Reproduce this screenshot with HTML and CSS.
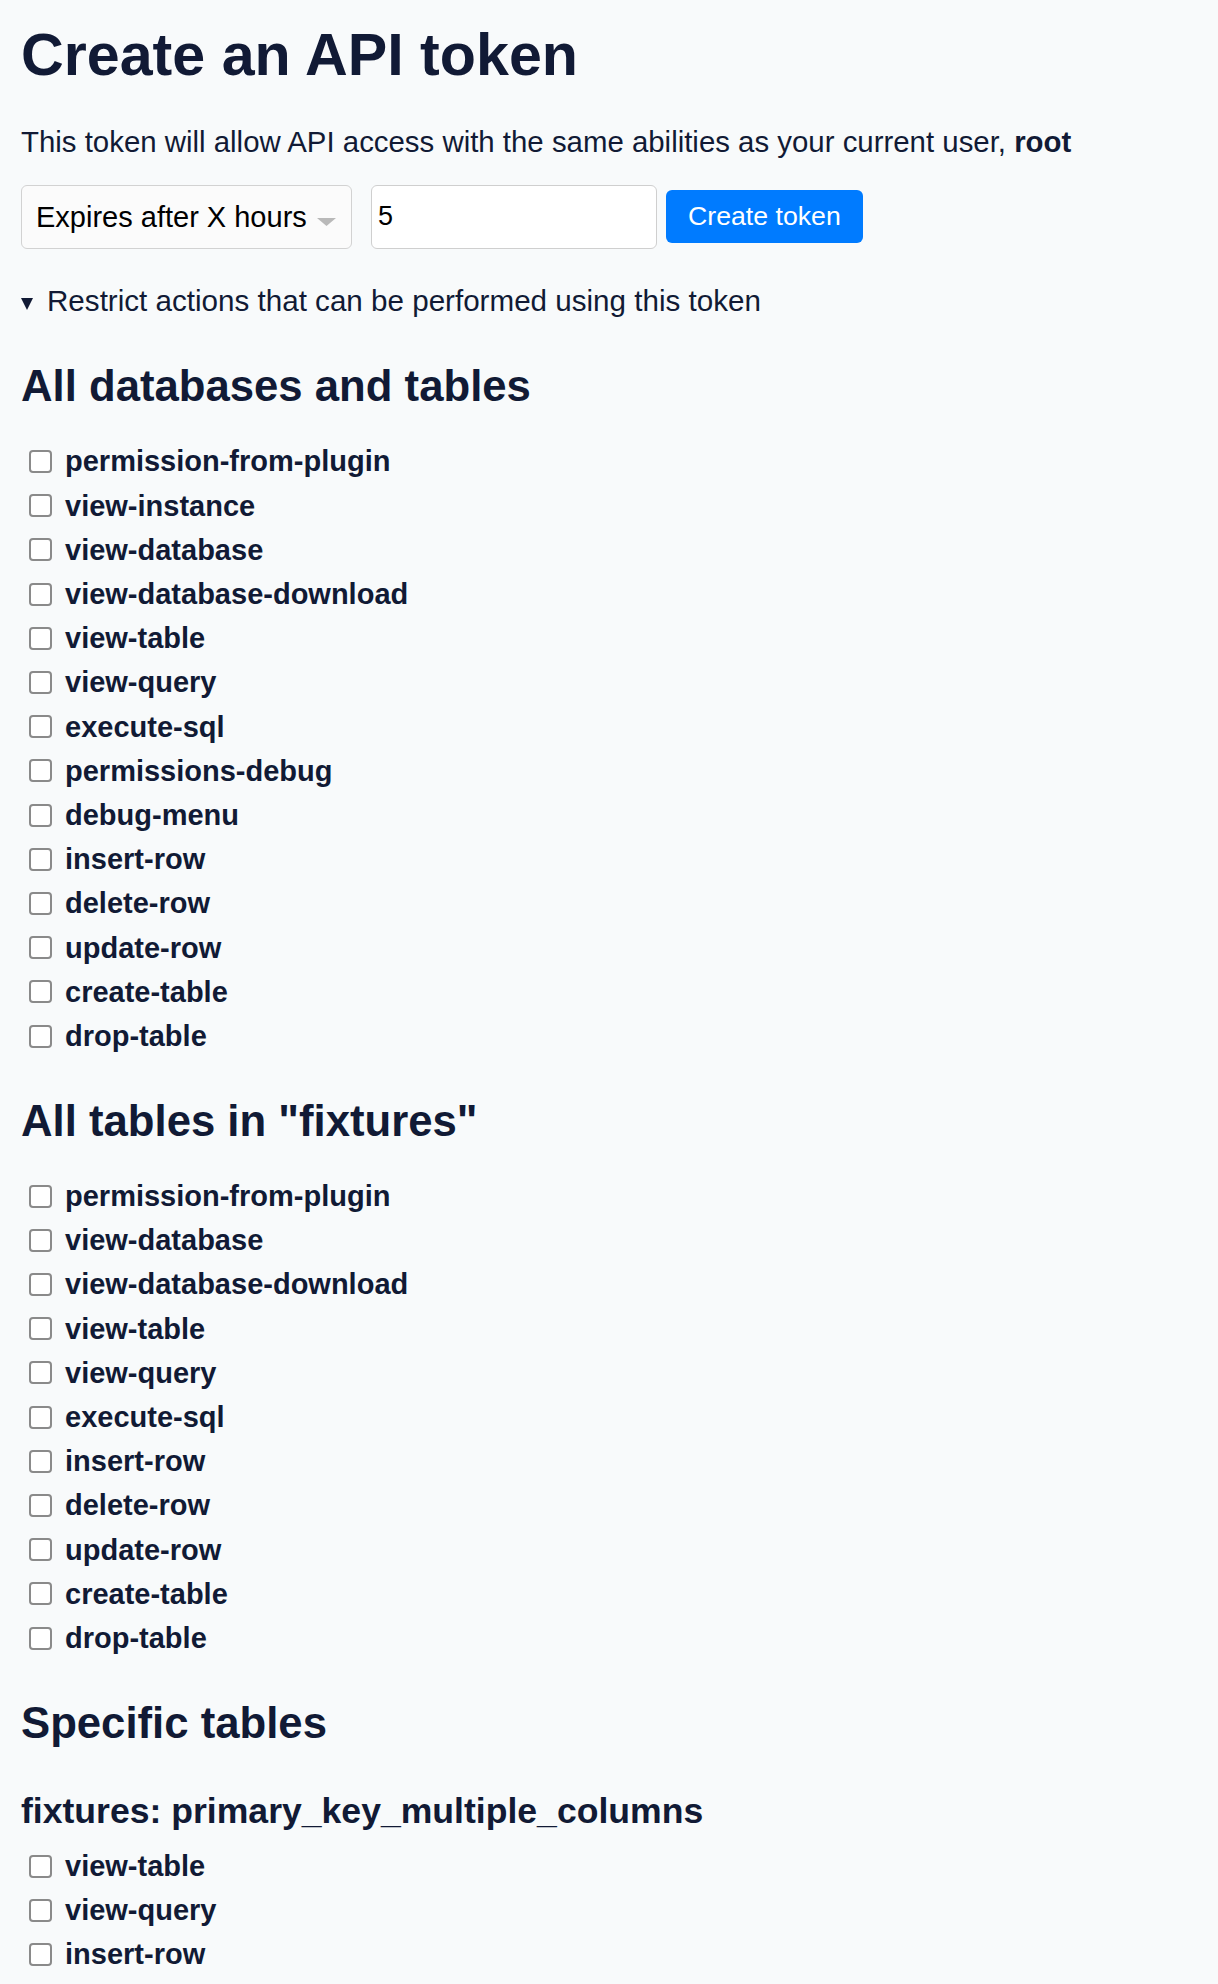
FILE: index.html
```html
<!DOCTYPE html>
<html lang="en">

<head>
  <meta charset="utf-8">
  <title>Create an API token</title>
  <link rel="stylesheet" href="styles.css">
</head>

<body>
  <h1>Create an API token</h1>
  <p>This token will allow API access with the same abilities as your current user, <strong>root</strong></p>

  <form class="tokenForm" action="#" method="post">
    <select class="expireSelect" name="expire_type">
      <option value="hours">Expires after X hours</option>
      <option value="minutes">Expires after X minutes</option>
      <option value="days">Expires after X days</option>
      <option value="">Token never expires</option>
    </select>
    <input class="expireInput" type="text" name="expire_duration" value="5">
    <button class="createButton" type="submit">Create token</button>
  </form>

  <details class="restrict" open>
    <summary>Restrict actions that can be performed using this token</summary>

    <h2>All databases and tables</h2>
    <ul class="actionList">
      <li><label><input class="actionBox" type="checkbox" name="all:permission-from-plugin">permission-from-plugin</label></li>
      <li><label><input class="actionBox" type="checkbox" name="all:view-instance">view-instance</label></li>
      <li><label><input class="actionBox" type="checkbox" name="all:view-database">view-database</label></li>
      <li><label><input class="actionBox" type="checkbox" name="all:view-database-download">view-database-download</label></li>
      <li><label><input class="actionBox" type="checkbox" name="all:view-table">view-table</label></li>
      <li><label><input class="actionBox" type="checkbox" name="all:view-query">view-query</label></li>
      <li><label><input class="actionBox" type="checkbox" name="all:execute-sql">execute-sql</label></li>
      <li><label><input class="actionBox" type="checkbox" name="all:permissions-debug">permissions-debug</label></li>
      <li><label><input class="actionBox" type="checkbox" name="all:debug-menu">debug-menu</label></li>
      <li><label><input class="actionBox" type="checkbox" name="all:insert-row">insert-row</label></li>
      <li><label><input class="actionBox" type="checkbox" name="all:delete-row">delete-row</label></li>
      <li><label><input class="actionBox" type="checkbox" name="all:update-row">update-row</label></li>
      <li><label><input class="actionBox" type="checkbox" name="all:create-table">create-table</label></li>
      <li><label><input class="actionBox" type="checkbox" name="all:drop-table">drop-table</label></li>
    </ul>

    <h2>All tables in "fixtures"</h2>
    <ul class="actionList">
      <li><label><input class="actionBox" type="checkbox" name="database:fixtures:permission-from-plugin">permission-from-plugin</label></li>
      <li><label><input class="actionBox" type="checkbox" name="database:fixtures:view-database">view-database</label></li>
      <li><label><input class="actionBox" type="checkbox" name="database:fixtures:view-database-download">view-database-download</label></li>
      <li><label><input class="actionBox" type="checkbox" name="database:fixtures:view-table">view-table</label></li>
      <li><label><input class="actionBox" type="checkbox" name="database:fixtures:view-query">view-query</label></li>
      <li><label><input class="actionBox" type="checkbox" name="database:fixtures:execute-sql">execute-sql</label></li>
      <li><label><input class="actionBox" type="checkbox" name="database:fixtures:insert-row">insert-row</label></li>
      <li><label><input class="actionBox" type="checkbox" name="database:fixtures:delete-row">delete-row</label></li>
      <li><label><input class="actionBox" type="checkbox" name="database:fixtures:update-row">update-row</label></li>
      <li><label><input class="actionBox" type="checkbox" name="database:fixtures:create-table">create-table</label></li>
      <li><label><input class="actionBox" type="checkbox" name="database:fixtures:drop-table">drop-table</label></li>
    </ul>

    <h2>Specific tables</h2>
    <h3>fixtures: primary_key_multiple_columns</h3>
    <ul class="actionList">
      <li><label><input class="actionBox" type="checkbox" name="resource:fixtures:primary_key_multiple_columns:view-table">view-table</label></li>
      <li><label><input class="actionBox" type="checkbox" name="resource:fixtures:primary_key_multiple_columns:view-query">view-query</label></li>
      <li><label><input class="actionBox" type="checkbox" name="resource:fixtures:primary_key_multiple_columns:insert-row">insert-row</label></li>
    </ul>
  </details>

</body>

</html>
```

FILE: styles.css
```css
body {
  margin: 0;
  padding: 19px 21px 0;
  background: #f8fafb;
  color: #111a35;
  font-family: "Liberation Sans", Arial, Helvetica, sans-serif;
  font-size: 29px;
  line-height: 1.5;
}

h1,
h2,
h3 {
  font-weight: 700;
  line-height: 1.2;
  padding: 0;
}

h1 {
  font-size: 59.2px;
  margin: 0 0 30px;
}

h2 {
  font-size: 43.7px;
  margin: 36.5px 0 27px;
}

h3 {
  font-size: 35.6px;
  margin: 40.8px 0 11.5px;
}

p {
  font-size: 29.4px;
  margin: 0 0 20.5px;
}

.tokenForm {
  display: flex;
  align-items: center;
  margin-bottom: 30.5px;
}

.expireSelect {
  -webkit-appearance: none;
  appearance: none;
  box-sizing: border-box;
  width: 331px;
  height: 64px;
  padding: 0 14px;
  margin: 0 19px 0 0;
  font-family: inherit;
  font-size: 29px;
  color: #000;
  border: 1px solid #d2d2d2;
  border-radius: 6px;
  background: #fbfbfb url("data:image/svg+xml,%3Csvg xmlns='http://www.w3.org/2000/svg' width='19' height='8'%3E%3Cpath d='M0 0h19L9.5 8z' fill='%23b9b9b9'/%3E%3C/svg%3E") no-repeat right 15px top 32px;
}

.expireInput {
  box-sizing: border-box;
  width: 286px;
  height: 64px;
  padding: 0 6px;
  margin: 0 9px 0 0;
  font-family: inherit;
  font-size: 27px;
  color: #000;
  background: #fff;
  border: 1px solid #cfcfcf;
  border-radius: 6px;
}

.createButton {
  height: 53px;
  padding: 0 22px;
  font-family: inherit;
  font-size: 26.7px;
  color: #fff;
  background: #007bff;
  border: none;
  border-radius: 6px;
}

.restrict summary {
  display: block;
  list-style: none;
  font-size: 29.6px;
  margin-bottom: 0;
  cursor: pointer;
}

.restrict summary::-webkit-details-marker {
  display: none;
}

.restrict summary::before {
  content: "";
  display: inline-block;
  border-left: 6px solid transparent;
  border-right: 6px solid transparent;
  border-top: 12px solid #111a35;
  margin-right: 14px;
  vertical-align: 1px;
}

.actionList {
  list-style: none;
  margin: 0;
  padding: 0;
}

.actionList li {
  height: 44.2px;
  display: flex;
  align-items: center;
}

.actionList label {
  display: flex;
  align-items: center;
  font-weight: 700;
  line-height: 44.2px;
}

.actionBox {
  -webkit-appearance: none;
  appearance: none;
  box-sizing: border-box;
  width: 23px;
  height: 23px;
  margin: 0 13px 0 8px;
  background: #fff;
  border: 2.5px solid #8a8a8a;
  border-radius: 4px;
}
```
